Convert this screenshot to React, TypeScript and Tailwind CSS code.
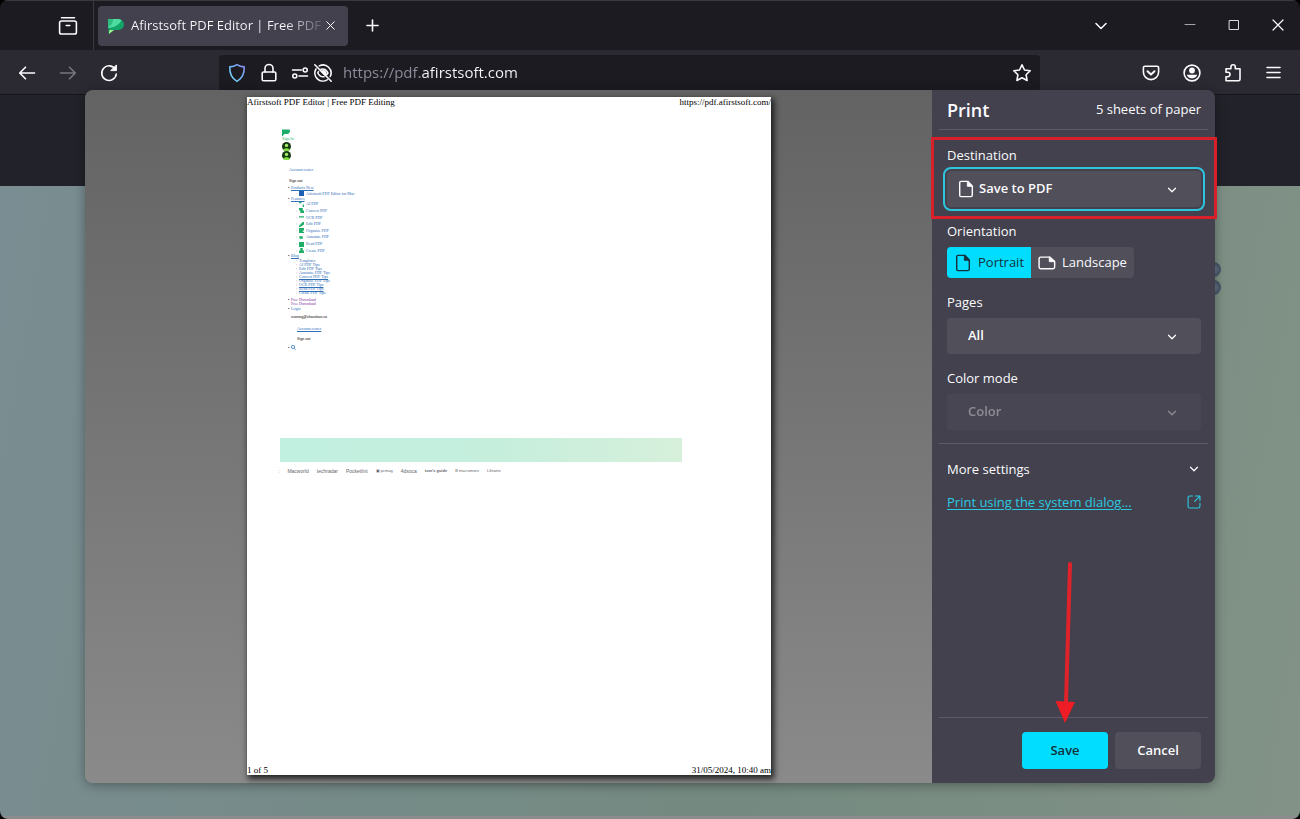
import { ReactNode } from "react";
import { ChevronDown, Plus, X } from "lucide-react";

const features = [
  { name: "AI PDF", icon: "M0 0h2v1H0zM3 2h1v2H3z" },
  { name: "Convert PDF", icon: "M0 0h3v2H0zM1 2h3v2H1z" },
  { name: "OCR PDF", icon: "M0 1h4v1H0z" },
  { name: "Edit PDF", icon: "M3 0h1v2L1 4H0V3z" },
  { name: "Organize PDF", icon: "M0 0h4v2H3v1h1v1H0z" },
  { name: "Annotate PDF", icon: "M0 1h3v2H1v1z" },
  { name: "Read PDF", icon: "M0 0h4v4H0z" },
  { name: "Create PDF", icon: "M1 0h2v2h1v2H0V2h1z" },
];

const tips = [
  "Templates",
  "AI PDF Tips",
  "Edit PDF Tips",
  "Annotate PDF Tips",
  "Convert PDF Tips",
  "Organize PDF Tips",
  "OCR PDF Tips",
  "Read PDF Tips",
  "Create PDF Tips",
];

const underlinedTips = ["Convert PDF Tips", "OCR PDF Tips", "Read PDF Tips"];

type IconProps = { children: ReactNode; className?: string };

const Icon = ({ children, className = "size-5" }: IconProps) => (
  <svg
    viewBox="0 0 20 20"
    fill="none"
    stroke="currentColor"
    strokeWidth="1.6"
    strokeLinecap="round"
    strokeLinejoin="round"
    className={`shrink-0 ${className}`}
    aria-hidden="true"
  >
    {children}
  </svg>
);

const ToolButton = ({
  label,
  children,
  className = "w-[41px]",
}: {
  label: string;
  children: ReactNode;
  className?: string;
}) => (
  <button
    type="button"
    aria-label={label}
    className={`flex h-9 shrink-0 items-center justify-center ${className}`}
  >
    {children}
  </button>
);

const TabBar = () => (
  <div className="flex h-[50px] shrink-0 items-center border-t border-[#3a3a3e] bg-[#1c1b22]">
    <div className="flex h-full w-[94px] items-center justify-end border-r border-[#3a3944] pr-[5px]">
      <ToolButton label="Firefox View">
        <Icon>
          <path d="M3.500 1.800h13" />
          <path d="M3.400 5h13.200a1.800 1.800 0 0 1 1.800 1.800v9.400a1.800 1.800 0 0 1-1.800 1.800H3.400a1.800 1.800 0 0 1-1.800-1.800V6.800A1.800 1.800 0 0 1 3.400 5z" />
          <path d="M8.200 9.500h3.600" />
        </Icon>
      </ToolButton>
    </div>
    <div className="ml-1 flex h-10 w-[250px] items-center rounded bg-[#42414d] pl-2.5 pr-2.5">
      <svg viewBox="0 0 16 16" className="size-4 shrink-0" aria-hidden="true">
        <path d="M0 1h9.500C13.500 1 16 3.500 16 6.500S13.500 12 10 12H6l-5.200 4z" fill="#12a567" />
        <path d="M0 1h9.500c1.500 0 3 .4 4 1.200C11 7 6 9.500 0 10z" fill="#4fdca0" />
        <path d="M0 1h5c0 4-2 7-5 8z" fill="#2ebd80" />
        <path d="M0.800 16 1.500 12l8.500 0H6z" fill="#a4f58b" />
      </svg>
      <span className="ml-[7px] flex-1 overflow-hidden whitespace-nowrap bg-[linear-gradient(90deg,#fbfbfe_80%,#6b6a75_98%)] bg-clip-text text-transparent">
        Afirstsoft PDF Editor | Free PDF
      </span>
      <ToolButton label="Close tab" className="w-4">
        <X className="size-[15px]" strokeWidth={1.6} />
      </ToolButton>
    </div>
    <ToolButton label="New tab" className="w-12">
      <Plus className="size-[19px]" strokeWidth={2} />
    </ToolButton>
    <div className="ml-auto flex items-center">
      <ToolButton label="List all tabs" className="mr-[45px] w-11">
        <ChevronDown className="size-5" strokeWidth={1.8} />
      </ToolButton>
      <ToolButton label="Minimize" className="w-11">
        <Icon className="size-5 text-[#a5a4ac]">
          <path d="M5 8.500h10" strokeWidth="1" />
        </Icon>
      </ToolButton>
      <ToolButton label="Maximize" className="w-11">
        <Icon className="size-5 text-[#dddce2]">
          <path d="M5.500 4.500h9v9h-9z" strokeWidth="1" />
        </Icon>
      </ToolButton>
      <ToolButton label="Close window" className="w-11">
        <Icon>
          <path d="m5 4 10 10M15 4 5 14" strokeWidth="1.2" />
        </Icon>
      </ToolButton>
    </div>
  </div>
);

const Toolbar = () => (
  <div className="flex h-[45px] shrink-0 items-center border-b border-[#15141a] bg-[#2b2a33] px-1.5 pt-px">
    <ToolButton label="Back">
      <Icon>
        <path d="M17.500 10H3M8.500 4.200 2.700 10l5.800 5.800" />
      </Icon>
    </ToolButton>
    <ToolButton label="Forward">
      <Icon className="size-5 text-[#77767f]">
        <path d="M2.500 10H17M11.500 4.200l5.800 5.800-5.800 5.800" />
      </Icon>
    </ToolButton>
    <ToolButton label="Reload">
      <Icon>
        <path d="M16.400 6.500A7.300 7.300 0 1 0 17.300 11" />
        <path d="M17.400 2.300v5.300h-5.300z" fill="currentColor" strokeWidth="1" />
      </Icon>
    </ToolButton>
    <div className="mx-[90px] flex h-9 min-w-0 flex-1 items-center rounded bg-[#1c1b22] pl-2">
      <svg viewBox="0 0 20 20" fill="none" className="size-5 shrink-0" aria-hidden="true">
        <defs>
          <linearGradient id="shield" x1="1" y1="0" x2="0" y2="1">
            <stop offset="0" stopColor="#8f8cf5" />
            <stop offset=".5" stopColor="#6fb5f5" />
            <stop offset="1" stopColor="#7adcf0" />
          </linearGradient>
        </defs>
        <path
          d="M10 1.600c2 1.300 4.500 2.100 7.200 2.300.3 6.300-1.700 11.400-7.200 14.500C4.500 15.300 2.500 10.200 2.800 3.900 5.500 3.700 8 2.900 10 1.600z"
          stroke="url(#shield)"
          strokeWidth="1.6"
          strokeLinejoin="round"
        />
      </svg>
      <Icon className="ml-3 size-5">
        <path d="M4.500 9h11a1.300 1.300 0 0 1 1.300 1.300v6.200a1.300 1.300 0 0 1-1.300 1.300h-11a1.300 1.300 0 0 1-1.300-1.300v-6.200A1.300 1.300 0 0 1 4.500 9z" />
        <path d="M6 9V5.500a4 4 0 0 1 8 0V9" />
      </Icon>
      <Icon className="ml-[11px] size-5">
        <path d="M2.500 7h9M9 13h8.500" />
        <circle cx="15.2" cy="7" r="2" />
        <circle cx="4.8" cy="13" r="2" />
      </Icon>
      <Icon className="ml-[3px] size-5">
        <path d="M6.300 2.900A8 8 0 0 1 17.200 13.500M14.200 16.800A8 8 0 0 1 3 6" />
        <path d="m1.800 1.800 16.400 16.400" />
        <path d="M8 6.200c3-.8 5.500.8 7 3.800l-1.300 1.800M5.500 8.500 4.800 10c1.300 2.600 3.500 4 6.200 3.800" />
        <path d="m8.500 8.500 3.500 3.500a2.300 2.300 0 0 0-3.500-3.500z" fill="currentColor" />
      </Icon>
      <input
        type="text"
        aria-label="Address"
        defaultValue="https://pdf.afirstsoft.com"
        className="ml-2.5 min-w-0 flex-1 bg-[linear-gradient(90deg,#8f8f9d_77px,#fbfbfe_77px)] bg-clip-text text-[15px] text-transparent outline-none"
      />
      <ToolButton label="Bookmark this page" className="w-9">
        <Icon>
          <path d="m10 1.800 2.500 5.200 5.700.8-4.100 4 1 5.700-5.100-2.700-5.100 2.700 1-5.700-4.100-4 5.700-.8z" />
        </Icon>
      </ToolButton>
    </div>
    <ToolButton label="Save to Pocket">
      <Icon>
        <path d="M3.900 3.200h12.200a1.500 1.500 0 0 1 1.500 1.500V9a7.600 7.600 0 0 1-15.200 0V4.700a1.500 1.500 0 0 1 1.500-1.500z" />
        <path d="m6.500 8.200 3.500 3.300 3.500-3.300" strokeWidth="1.9" />
      </Icon>
    </ToolButton>
    <ToolButton label="Account">
      <Icon>
        <circle cx="10" cy="10" r="7.9" />
        <circle cx="10" cy="7.5" r="2.900" fill="currentColor" stroke="none" />
        <path d="M4.800 11.800h10.400c-.6 2.200-2.700 3.600-5.200 3.600s-4.600-1.400-5.200-3.600z" fill="currentColor" stroke="none" />
      </Icon>
    </ToolButton>
    <ToolButton label="Extensions">
      <Icon>
        <path d="M3 17.800h12.500a1.500 1.500 0 0 0 1.500-1.500V5.800h-4.700V4a2.200 2.200 0 0 0-4.400 0v1.800H3v3.500h1.800a2.200 2.200 0 0 1 0 4.400H3z" />
      </Icon>
    </ToolButton>
    <ToolButton label="Open menu">
      <Icon>
        <path d="M3 4.500h13M3 9.500h13M3 14.500h13" />
      </Icon>
    </ToolButton>
  </div>
);

const Avatar = () => (
  <svg viewBox="0 0 16 16" className="block size-[9px]" aria-hidden="true">
    <circle cx="8" cy="8" r="8" fill="#173a12" />
    <circle cx="8" cy="6" r="3" fill="#a5f06a" />
    <path d="M2 14c1-4 11-4 12 0-3 3-9 3-12 0z" fill="#7fe03f" />
  </svg>
);

const Bullet = () => <span className="inline-block w-[3px] text-black">•</span>;
const Ring = () => <span className="inline-block w-[3px] text-[#555]">◦</span>;

const PrintedPage = () => (
  <div className="flex h-full w-[524px] flex-col bg-white font-['Liberation_Serif',serif] text-black shadow-[2px_3px_6px_1px_rgba(0,0,0,0.750)]">
    <div className="flex justify-between text-[9px] leading-[10px]">
      <span>Afirstsoft PDF Editor | Free PDF Editing</span>
      <span>https://pdf.afirstsoft.com/</span>
    </div>
    <div className="flex-1 pl-[35px] pt-[22px] text-[4px] leading-[4px] text-[#2f6fb8]">
      <svg viewBox="0 0 16 16" className="size-2" aria-hidden="true">
        <path d="M0 1h14c1 0 2 1 2 3s-2 6-6 6H5l-5 5z" fill="#1fae68" />
      </svg>
      <p className="mb-px text-[#1fae68]">Sign In</p>
      <Avatar />
      <Avatar />
      <p className="ml-[7px] mt-2">Account center</p>
      <p className="ml-[7px] mt-[7px] text-black">Sign out</p>
      <ul className="ml-1.5 mt-[3px]">
        <li>
          <Bullet />
          <span className="underline">Products New</span>
        </li>
        <li className="ml-2 flex h-[7px] items-center">
          <Ring />
          <span className="mr-0.5 size-[5px] bg-[#1c5fb4]" />
          <span>Afirstsoft PDF Editor for Mac</span>
        </li>
        <li>
          <Bullet />
          <span className="underline">Features</span>
        </li>
        <li>
          <ul className="ml-2 flex h-[53px] flex-col justify-around">
            {features.map((feature) => (
              <li key={feature.name} className="flex items-center">
                <Ring />
                <svg viewBox="0 0 4 4" className="mr-0.5 size-[5px] fill-[#1fae68]" aria-hidden="true">
                  <path d={feature.icon} />
                </svg>
                <span>{feature.name}</span>
              </li>
            ))}
          </ul>
        </li>
        <li>
          <Bullet />
          <span className="underline">Blog</span>
        </li>
        <li>
          <ul className="ml-2 mt-px">
            {tips.map((tip) => (
              <li key={tip}>
                <Ring />
                <span className={underlinedTips.includes(tip) ? "underline" : ""}>{tip}</span>
              </li>
            ))}
          </ul>
        </li>
        <li className="mt-[3px] flex text-[#7a2f9a]">
          <Bullet />
          <span>
            Free Download
            <br />
            Free Download
          </span>
        </li>
        <li className="mt-px">
          <Bullet />
          Login
        </li>
        <li className="my-1 ml-[3px] text-black">wurong@zhuoshuo.cn</li>
        <li className="ml-[9px] mt-2 underline">Account center</li>
        <li className="ml-[9px] mt-1.5 text-black">Sign out</li>
        <li className="mt-1 flex items-center">
          <Bullet />
          <svg viewBox="0 0 10 10" className="size-[5px]" fill="none" stroke="currentColor" strokeWidth="1.5" aria-hidden="true">
            <circle cx="4" cy="4" r="3.200" />
            <path d="m6.500 6.500 3 3" />
          </svg>
        </li>
      </ul>
      <div className="-ml-0.5 mr-[89px] mt-[88px] h-6 bg-linear-to-r from-[#c1f0e0] via-[#c5eedd] to-[#d6f0db]" />
      <div className="-ml-1 mt-[7px] flex gap-2 font-['Liberation_Sans',sans-serif] text-[5px] text-[#66666c]">
        <span>:</span>
        <span>Macworld</span>
        <span>techradar</span>
        <span>Pocketlint</span>
        <span className="text-[4px]">▣ pcmag</span>
        <span>4dsoca</span>
        <span className="text-[4px] font-bold">tom's guide</span>
        <span className="text-[4px]">B macrumors</span>
        <span className="text-[4px]">Lifewire</span>
      </div>
    </div>
    <div className="flex justify-between text-[9px] leading-[10px]">
      <span>1 of 5</span>
      <span>31/05/2024, 10:40 am</span>
    </div>
  </div>
);

const SheetIcon = ({ landscape = false }: { landscape?: boolean }) => (
  <Icon className="size-[18px]">
    {landscape ? (
      <>
        <path d="M3 3.500h10l5.500 5v6a1.800 1.800 0 0 1-1.800 1.800H3a1.800 1.800 0 0 1-1.800-1.800V5.300A1.800 1.800 0 0 1 3 3.500z" />
        <path d="M12.500 3.500v5h6z" fill="currentColor" strokeWidth="1" />
      </>
    ) : (
      <>
        <path d="M4.500 1.500H12L17 7v10a1.500 1.500 0 0 1-1.500 1.500h-11A1.500 1.500 0 0 1 3 17V3a1.500 1.500 0 0 1 1.500-1.500z" />
        <path d="M11.500 1.500V7H17z" fill="currentColor" strokeWidth="1" />
      </>
    )}
  </Icon>
);

const SelectField = ({
  id,
  label,
  value,
  icon,
  disabled,
  focused,
}: {
  id: string;
  label: string;
  value: string;
  icon?: ReactNode;
  disabled?: boolean;
  focused?: boolean;
}) => (
  <div>
    <label htmlFor={id} className="block leading-5">
      {label}
    </label>
    <div className={`relative mt-1.5 ${disabled ? "opacity-40" : ""}`}>
      {icon && <span className="absolute inset-y-0 left-2.5 flex items-center">{icon}</span>}
      <select
        id={id}
        disabled={disabled}
        className={`h-9 w-full appearance-none rounded bg-[#504f5a] font-semibold ${
          icon ? "pl-8" : "pl-[21px]"
        } ${focused ? "outline-2 outline-offset-2 outline-[#2ec4dc]" : ""}`}
      >
        <option>{value}</option>
      </select>
      <ChevronDown className="pointer-events-none absolute right-[22px] top-3 size-3.5" strokeWidth={2.2} />
    </div>
  </div>
);

const PrintSettings = () => (
  <form
    className="relative flex w-[283px] shrink-0 flex-col rounded-r-lg bg-[#42414d] text-[13px]"
    onSubmit={(event) => {
      event.preventDefault();
    }}
  >
    <div className="mx-[7px] flex h-10 items-center justify-between border-b border-[#5b5a66] pl-2 pr-[7px]">
      <h1 className="text-lg font-semibold">Print</h1>
      <span>5 sheets of paper</span>
    </div>
    <div className="flex flex-col gap-3.5 pl-[15px] pr-3.5 pt-[15px]">
      <div className="relative">
        <SelectField id="destination" label="Destination" value="Save to PDF" icon={<SheetIcon />} focused />
        <div className="pointer-events-none absolute -inset-x-4 -bottom-3 -top-2 border-3 border-[#d8202a]" />
      </div>
      <fieldset>
        <legend className="leading-5">Orientation</legend>
        <div className="mt-1.5 inline-flex h-[31px] overflow-hidden rounded bg-[#504f5a] align-top">
          <label className="flex items-center gap-1.5 bg-[#00ddff] px-[7px] text-[#15313c]">
            <input type="radio" name="orientation" defaultChecked className="sr-only" />
            <SheetIcon />
            Portrait
          </label>
          <label className="flex items-center gap-1.5 px-[7px]">
            <input type="radio" name="orientation" className="sr-only" />
            <SheetIcon landscape />
            Landscape
          </label>
        </div>
      </fieldset>
      <SelectField id="pages" label="Pages" value="All" />
      <SelectField id="color" label="Color mode" value="Color" disabled />
    </div>
    <div className="mx-[7px] mt-[13px] border-t border-[#5b5a66] pl-2 pr-[7px] pt-[15px]">
      <button type="button" className="flex w-full items-center justify-between leading-5">
        More settings
        <ChevronDown className="size-3.5" strokeWidth={2.2} />
      </button>
      <a href="#system" className="mt-[13px] flex items-center justify-between leading-5 text-[#2cc9e2]">
        <span className="underline underline-offset-2">Print using the system dialog...</span>
        <Icon className="size-3.5">
          <path d="M8 1.500H4A2.500 2.500 0 0 0 1.500 4v12A2.500 2.500 0 0 0 4 18.500h12a2.500 2.500 0 0 0 2.500-2.500v-4M12 1.500h6.500V8M18 2l-7 7" />
        </Icon>
      </a>
    </div>
    <div className="mx-[7px] mt-auto flex justify-end gap-[7px] border-t border-[#5b5a66] pb-3.5 pr-[7px] pt-3.5 font-semibold">
      <button type="submit" className="h-[37px] w-[86px] rounded bg-[#00ddff] text-[#15313c]">
        Save
      </button>
      <button type="button" className="h-[37px] w-[86px] rounded bg-[#504f5a]">
        Cancel
      </button>
    </div>
    <svg
      viewBox="0 0 20 162"
      className="pointer-events-none absolute bottom-[60px] right-[140px] h-[162px] w-5"
      aria-hidden="true"
    >
      <path d="M15 3 11 142" stroke="#e0222b" strokeWidth="4" strokeLinecap="round" />
      <path d="M0.500 140 20 141 10 162z" fill="#ee1c25" />
    </svg>
  </form>
);

const App = () => {
  return (
    <div className="bg-black">
      <div className="flex h-screen flex-col overflow-hidden rounded-lg font-['Open_Sans',sans-serif] text-[13px] text-[#fbfbfe]">
        <TabBar />
        <Toolbar />
        <main className="relative flex flex-1 flex-col">
          <div className="h-[91px] bg-[#22222a]" />
          <div className="flex-1 overflow-hidden border-b-3 border-[#8c8c8c] bg-[linear-gradient(100deg,#7a8d92_0%,#758b87_35%,#748a80_60%,#829287_100%)]">
            <div className="mr-[79px] mt-[76px] flex flex-col items-end gap-[3px]">
              <span className="size-[15px] rounded-full bg-radial from-[#75879a] to-[#2b3a4c]" />
              <span className="size-[15px] rounded-full bg-radial from-[#75879a] to-[#2b3a4c]" />
            </div>
          </div>
          <div
            role="dialog"
            aria-label="Print"
            className="absolute inset-x-[85px] -top-[5px] bottom-9 flex rounded-lg shadow-[0_2px_12px_rgba(0,0,0,0.350)]"
          >
            <div className="flex flex-1 justify-center rounded-l-lg bg-linear-to-b from-[#636363] to-[#8a8a8a] pb-2 pl-px pt-[7px]">
              <PrintedPage />
            </div>
            <PrintSettings />
          </div>
        </main>
      </div>
    </div>
  );
};

export default App;
